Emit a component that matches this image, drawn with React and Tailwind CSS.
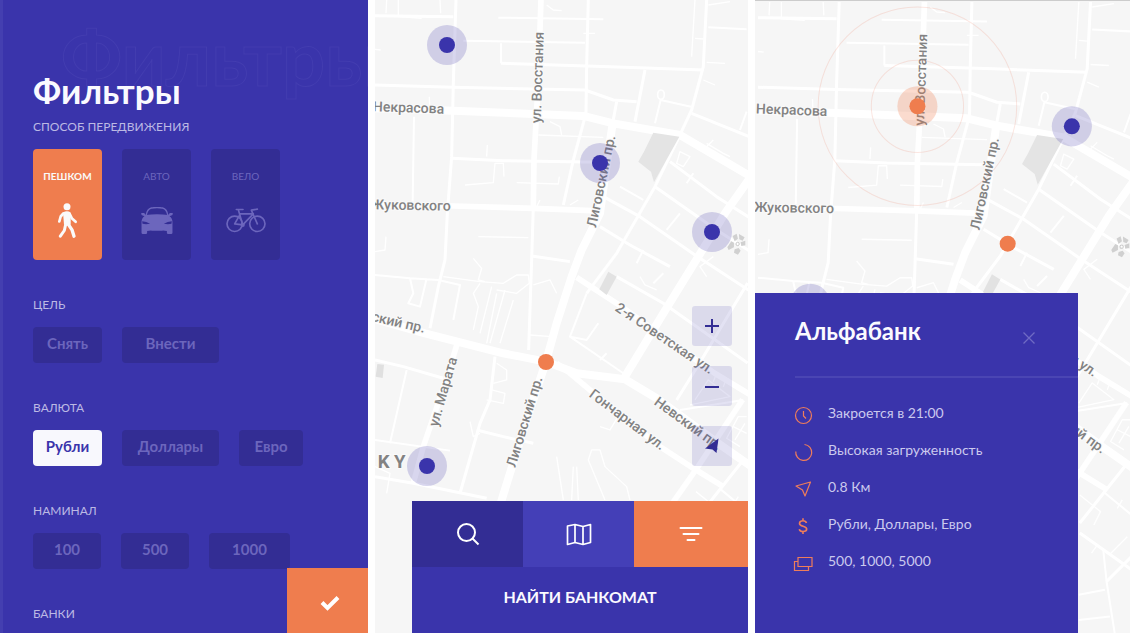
import React from "react";

const ROADS = {
  major: [
    "M15 325L250 332L640 348L730 370L930 405L1140 528",
    "M728 370L712 480L690 640L635 750L605 830L560 970L528 1085L470 1260L395 1500L340 1700",
    "M1150 520L1065 640L985 770L880 940L765 1130",
    "M-10 950L165 1000L400 1060L528 1085L620 1120L765 1138L860 1195L1043 1329L1180 1425",
  ],
  avenue: [
    "M513 0L505 240L492 480L490 620",
    "M560 1090L600 1120L660 1170L870 1340L975 1408L1060 1460",
    "M620 832L740 910L1033 1119L1150 1190",
    "M15 615L250 618L490 625L665 632",
    "M1118 1199L978 1409L900 1520L840 1620",
    "M262 1030L225 1150L160 1340L130 1450",
  ],
  street: [
    "M258 0L250 250L245 470L232 640L225 780L205 860L180 985",
    "M490 620L485 780L476 1050",
    "M655 0L650 200L648 340L610 480L580 615",
    "M1010 0L1000 200L965 330L930 405",
    "M930 405L855 560L740 760L650 880",
    "M15 47L250 50M15 255L250 262L645 270L730 300L800 305",
    "M393 190L720 200L1000 210M825 210L795 365M965 340L1150 415",
    "M740 305L728 370M245 475L400 482L690 487",
    "M740 830L880 910L978 979L1133 1089M900 485L1040 590L1150 660",
    "M855 560L1040 690L1150 760M700 590L810 650L975 765L1150 880",
    "M690 680L780 735L900 800M485 768L600 785",
    "M15 1080L100 1100L220 1135M375 1070L360 1200L330 1270L270 1480",
    "M320 1290L400 1310L490 1330M15 1430L130 1450L350 1495",
    "M1113 1389L978 1559M978 1589L1150 1711M1133 1659L1058 1734",
    "M1133 849L983 1099L920 1200",
  ],
  lane: [
    "M280 122L645 128M393 130L393 190M385 53L700 58M1015 82L1130 88",
    "M855 370L872 300L963 320M132 350L128 605M110 1110L60 1330",
    "M650 880L600 1010L760 1120M1130 335L1110 390M750 560L820 600M600 1010L650 1020L685 970M690 1080L710 1060",
    "M930 1230L1120 1200M890 690L930 640M950 550L970 520",
    "M1053 1469L1133 1535M1048 1639L1058 1734L1083 1893",
    "M975 1774L1053 1759M975 1849L1068 1839M15 1320L240 1352",
    "M820 750L800 790M880 820L850 850",
    "M15 825L120 835L205 840L270 855L250 960M120 835L130 880L115 910L150 920L170 835",
  ],
  path: [
    "M975 0L965 170M975 115L1000 117M1010 187L1065 190M1000 240L1035 255M1015 15L1080 5",
    "M505 405L700 412M352 435L350 470M285 555L370 548L375 490L400 490L402 530",
    "M440 548L565 552L568 530M540 365L570 380L575 405M325 710L475 713M15 755L45 750L48 710",
    "M530 15L550 30L575 32M640 100L675 100M15 148L32 150M85 0L85 50L155 55M50 0L48 40M210 0L212 40",
    "M178 290L180 340M600 615L625 600M510 600L500 620",
    "M310 775L335 805L325 840L345 845M220 830L330 845L400 850L440 825L475 825L478 850L440 880L380 870",
    "M330 850L310 880L325 920L310 990M365 860L330 1000M380 880L350 1030M405 870L360 1030M430 900L390 1030",
    "M380 1090L410 1110L410 1140L370 1150M365 1170L405 1180L400 1210L350 1200",
    "M480 1005L545 1010L540 1040M490 855L540 840L560 880",
    "M560 1370L580 1500M620 1400L625 1500M610 1400L605 1500",
    "M705 1500L655 1380L665 1350L690 1350L705 1400L770 1460L780 1500",
    "M690 1280L720 1290L750 1240M300 1265L310 1310L330 1300M15 1400L60 1420L50 1480",
    "M930 455L960 470L940 500L920 490ZM960 430L990 450M1010 430L1060 460L1080 470M1030 420L1000 450",
    "M975 1200L1015 1140L1080 1190L960 1215M1030 1145L1040 1120M1060 1160L1070 1135",
    "M1130 1250L1105 1250L1070 1315L1110 1340M1125 1270L1095 1320M1090 1280L1130 1300",
    "M978 1475L1040 1525L1020 1565M1013 1649L1030 1625M1090 1515L1105 1490M1070 1650L1120 1600",
    "M810 830L825 855L860 870M1010 830L990 800L1030 770",
  ],
};

const LABELS = [
  { text: "ул. Восстания", x: 512, y: 370, angle: -88 },
  { text: "ул. Некрасова", x: 222, y: 341, angle: 2, anchor: "end" },
  { text: "ул. Жуковского", x: 242, y: 632, angle: 1, anchor: "end" },
  { text: "Лиговский пр.", x: 678, y: 684, angle: -78 },
  { text: "Невский пр.", x: 162, y: 999, angle: 13, anchor: "end" },
  { text: "ул. Марата", x: 203, y: 1282, angle: -74 },
  { text: "Лиговский пр.", x: 436, y: 1404, angle: -73 },
  { text: "Гончарная ул.", x: 655, y: 1188, angle: 37 },
  { text: "Невский пр.", x: 850, y: 1212, angle: 36 },
  { text: "2-я Советская ул.", x: 733, y: 930, angle: 34 },
];

function CityMap({ dx, dy, children }) {
  return (
    <svg
      viewBox="0 0 374 633"
      preserveAspectRatio="xMinYMin slice"
      className="absolute inset-0 h-full w-full bg-[#f6f6f6]"
      role="img"
      aria-label="Карта города"
    >
      <g transform={`translate(${dx} ${dy}) scale(0.3333)`}>
        <g fill="none" stroke="#ffffff" strokeLinejoin="round">
          {ROADS.path.map((d) => <path key={d} d={d} strokeWidth="4" />)}
          {ROADS.lane.map((d) => <path key={d} d={d} strokeWidth="6" />)}
          {ROADS.street.map((d) => <path key={d} d={d} strokeWidth="9" />)}
          {ROADS.avenue.map((d) => <path key={d} d={d} strokeWidth="17" />)}
          {ROADS.major.map((d) => <path key={d} d={d} strokeWidth="24" />)}
          <ellipse cx="873" cy="284" rx="10" ry="14" strokeWidth="5" />
        </g>
        <path d="M850 398L928 410L852 547L843 515L805 485L822 455Z" fill="#e4e4e4" />
        <path d="M715 815L740 830L710 885L688 868Z" fill="#e2e2e2" />
        <path d="M22 1092L42 1094L38 1134L17 1130Z" fill="#e0e0e0" />
        <g fill="#d0d0d0">
          <path d="M1088 708L1100 701L1104 716L1094 724Z" />
          <path d="M1107 702L1124 712L1118 722L1108 718Z" />
          <path d="M1084 724L1092 728L1092 742L1076 750L1072 742Z" />
          <path d="M1112 727L1126 722L1126 736L1114 738Z" />
          <path d="M1094 748L1106 744L1112 752L1104 764L1092 758Z" />
        </g>
        <circle cx="1103" cy="732" r="5" fill="none" stroke="#c8c8c8" strokeWidth="3" />
        <g
          fontFamily="Roboto, 'Liberation Sans', sans-serif"
          fontSize="42"
          fontWeight="500"
          fill="#828282"
          stroke="#fafafa"
          strokeWidth="6"
          paintOrder="stroke"
        >
          {LABELS.map((l, i) => (
            <text key={i} textAnchor={l.anchor || "start"} transform={`translate(${l.x} ${l.y}) rotate(${l.angle})`}>
              {l.text}
            </text>
          ))}
          <text y="1403" fontSize="56" fontWeight="700">
            <tspan x="23">K</tspan>
            <tspan x="72">Y</tspan>
          </text>
        </g>
      </g>
      {children}
    </svg>
  );
}

function Pin({ x, y, color = "#3a34ab", halo = "0.2" }) {
  return (
    <g fill={color}>
      <circle cx={x} cy={y} r="20" opacity={halo} />
      <circle cx={x} cy={y} r="8" />
    </g>
  );
}

function WalkIcon() {
  return (
    <svg viewBox="0 0 60 104" className="h-[35px] w-5" aria-hidden="true">
      <circle cx="27" cy="11" r="10.5" fill="#fafafa" />
      <path d="M15 28Q27 21 38 28L38 64Q28 70 18 64Z" fill="#fafafa" />
      <g fill="none" stroke="#fafafa" strokeWidth="8" strokeLinecap="round" strokeLinejoin="round">
        <path d="M16 31L8 40L4 55" />
        <path d="M36 34L42 46L53 56" />
        <path d="M30 62L42 80L48 99" strokeWidth="10" />
        <path d="M23 64L19 82L7 99" strokeWidth="9" />
      </g>
    </svg>
  );
}

function CarIcon() {
  return (
    <svg viewBox="0 0 96 82" className="h-[27px] w-8" aria-hidden="true">
      <path d="M15 26Q18 6 31 3Q48 0 65 3Q78 6 81 26" fill="none" stroke="currentColor" strokeWidth="4" />
      <path d="M0 18L9 18L14 24Q48 20 82 24L87 18L96 18L95 24L86 28Q95 34 95 46V78Q95 82 91 82H82Q78 82 78 78V73Q66 70 63 72H33Q30 70 18 73V78Q18 82 14 82H5Q1 82 1 78V46Q1 34 10 28L1 24Z" fill="currentColor" />
      <path d="M3 43Q16 43 27 51Q14 54 4 51ZM93 43Q80 43 69 51Q82 54 92 51Z" fill="#332d94" />
    </svg>
  );
}

function BikeIcon() {
  return (
    <svg viewBox="0 0 120 74" className="h-[25px] w-10" fill="none" stroke="#6c66bd" strokeWidth="5" strokeLinecap="round" strokeLinejoin="round" aria-hidden="true">
      <circle cx="26" cy="47" r="23" />
      <circle cx="94" cy="47" r="23" />
      <path d="M26 47L43 17L82 17L50 50L26 47M50 50L37 5M31 4L51 4" />
      <path d="M94 47L76 6L94 3" />
      <circle cx="50" cy="50" r="4" />
    </svg>
  );
}

function Chip({ width, active, children }) {
  return (
    <button
      type="button"
      aria-pressed={!!active}
      className={`${width} h-9 rounded pb-1 text-[15px] font-bold ${active ? "bg-[#f8f8fd] text-[#3a34ab]" : "bg-[#332d94] text-[#6c66bd]"}`}
    >
      {children}
    </button>
  );
}

function Section({ title, children }) {
  return (
    <section>
      <h2 className="text-xs leading-5 text-[#bcb9e4]">{title}</h2>
      {children && <div className="mt-3 mb-[35px] flex gap-5">{children}</div>}
    </section>
  );
}

const TRANSPORT = [
  { name: "ПЕШКОМ", icon: <WalkIcon />, active: true },
  { name: "АВТО", icon: <CarIcon /> },
  { name: "ВЕЛО", icon: <BikeIcon /> },
];

function Filters() {
  return (
    <section className="relative overflow-hidden border-l-[3px] border-[#443fb0] bg-[#3a34ab] pt-[70px] pl-[30px]">
      <div
        aria-hidden="true"
        className="absolute top-3 left-[58px] text-[76px] leading-[90px] font-bold whitespace-nowrap text-[#3a34ab] [-webkit-text-stroke:1px_#433db0]"
      >
        Фильтры
      </div>
      <h1 className="relative mb-[7px] text-[35px] leading-10 font-bold text-[#fafaff]">Фильтры</h1>
      <Section title="СПОСОБ ПЕРЕДВИЖЕНИЯ">
        {TRANSPORT.map((t) => (
          <button
            key={t.name}
            type="button"
            aria-pressed={!!t.active}
            className={`flex h-[111px] w-[69px] flex-col items-center rounded pt-[19px] ${t.active ? "bg-[#ef7d4e] font-bold text-[#fafafa]" : "bg-[#332d94] text-[#6c66bd]"}`}
          >
            <span className="text-[10px] leading-4">{t.name}</span>
            <span className="mt-4 flex h-10 items-center">{t.icon}</span>
          </button>
        ))}
      </Section>
      <Section title="ЦЕЛЬ">
        <Chip width="w-[69px]">Снять</Chip>
        <Chip width="w-[97px]">Внести</Chip>
      </Section>
      <Section title="ВАЛЮТА">
        <Chip width="w-[69px]" active>Рубли</Chip>
        <Chip width="w-[97px]">Доллары</Chip>
        <Chip width="w-16">Евро</Chip>
      </Section>
      <Section title="НАМИНАЛ">
        <Chip width="w-[68px]">100</Chip>
        <Chip width="w-[68px]">500</Chip>
        <Chip width="w-[81px]">1000</Chip>
      </Section>
      <Section title="БАНКИ" />
      <button type="button" aria-label="Применить" className="absolute right-0 bottom-0 flex h-[65px] w-[81px] items-center justify-center bg-[#ef7d4e] pt-1 pl-1">
        <svg viewBox="0 0 20 16" className="h-4 w-5" fill="none" stroke="#fff" strokeWidth="4" aria-hidden="true">
          <path d="M2 7.5L7.5 13L18 2.5" />
        </svg>
      </button>
    </section>
  );
}

function MapButton({ label, children }) {
  return (
    <button type="button" aria-label={label} className="flex size-10 items-center justify-center rounded-[3px] bg-[#3a34ab]/14">
      <svg viewBox="0 0 20 20" className="size-5" fill="none" stroke="#332d94" strokeWidth="2" aria-hidden="true">
        {children}
      </svg>
    </button>
  );
}

function MapScreen() {
  return (
    <section className="relative flex flex-col justify-end overflow-hidden">
      <CityMap dx={-5} dy={0}>
        <Pin x={72} y={45} />
        <Pin x={225} y={163} />
        <Pin x={337} y={232} />
        <Pin x={52} y={466} />
        <circle cx="171" cy="362" r="8" fill="#ef7d4e" />
      </CityMap>
      <div className="relative mr-4 mb-[35px] flex flex-col gap-5 self-end">
        <MapButton label="Приблизить"><path d="M10 3V17M3 10H17" /></MapButton>
        <MapButton label="Отдалить"><path d="M3 11H17" /></MapButton>
        <MapButton label="Моё местоположение">
          <path d="M16.500 2.500L14.500 17L10.500 13.500L3 12.500Z" fill="#332d94" stroke="none" />
        </MapButton>
      </div>
      <div className="relative ml-[37px] bg-[#3a34ab]">
        <div className="grid h-[66px] grid-cols-[111fr_111fr_114fr]">
          <button type="button" aria-label="Поиск" className="flex items-center justify-center bg-[#332d94]">
            <svg viewBox="0 0 24 24" className="size-6" fill="none" stroke="#fff" strokeWidth="2" aria-hidden="true">
              <circle cx="10.500" cy="10.500" r="8.500" />
              <path d="M16.500 16.500L22.500 22.500" />
            </svg>
          </button>
          <button type="button" aria-label="Карта" className="flex items-center justify-center bg-[#443fb7]">
            <svg viewBox="0 0 26 24" className="h-6 w-[26px]" fill="none" stroke="#fff" strokeWidth="1.700" strokeLinejoin="round" aria-hidden="true">
              <path d="M1.500 4L9 2.500L17 4.500L24.500 2.500V20.500L17 22.500L9 20.500L1.500 22.500ZM9 2.500V20.500M17 4.500V22.500" />
            </svg>
          </button>
          <button type="button" aria-label="Фильтры" className="flex items-center justify-center bg-[#ef7d4e]">
            <svg viewBox="0 0 24 16" className="h-4 w-6" fill="none" stroke="#fff" strokeWidth="2" strokeLinecap="round" aria-hidden="true">
              <path d="M1.500 2H22.500M4.500 8H19.500M8.500 14H15.500" />
            </svg>
          </button>
        </div>
        <button type="button" className="h-[66px] w-full pb-[6px] text-base font-bold text-[#fafaff]">НАЙТИ БАНКОМАТ</button>
      </div>
    </section>
  );
}

const DETAILS = [
  {
    text: "Закроется в 21:00",
    icon: <><circle cx="8.5" cy="9.5" r="8" /><path d="M8.500 5V10L11 12.500" /></>,
  },
  {
    text: "Высокая загруженность",
    icon: <path d="M9.500 1.500A8 8 0 1 1 .8 8.500" />,
  },
  {
    text: "0.8 Км",
    icon: <path d="M1 6L15.500 2L10 16L7.500 10Z" strokeLinejoin="round" />,
  },
  {
    text: "Рубли, Доллары, Евро",
    icon: <path d="M11.500 6C11 4.400 9.700 3.800 8 3.800C6 3.800 4.500 4.800 4.500 6.400C4.500 10 11.700 8.400 11.700 12C11.700 13.600 10.200 14.500 8 14.500C6 14.500 4.700 13.700 4.200 12.200M8 1.200V3.800M8 14.500V17" strokeWidth="1.600" />,
  },
  {
    text: "500, 1000, 5000",
    icon: <path d="M3 3.500H17V12.500H3ZM3 7.500H-.5V16.500H13.500V12.500" />,
  },
];

function BankScreen() {
  return (
    <section className="relative flex flex-col justify-end overflow-hidden border-t border-[#cccccc]">
      <CityMap dx={-2} dy={1}>
        <g fill="none" stroke="#e8603c" strokeOpacity="0.15">
          <circle cx="162" cy="105" r="46" />
          <circle cx="162" cy="105" r="99" />
        </g>
        <Pin x={162} y={105} color="#ef7d4e" halo="0.28" />
        <Pin x={316} y={125} />
        <Pin x={55} y={302} />
        <circle cx="252" cy="242" r="8" fill="#ef7d4e" />
      </CityMap>
      <article className="relative mr-[52px] bg-[#3a34ab] pt-[18px] pb-[54px] pl-10">
        <div className="flex h-10 items-center justify-between">
          <h2 className="text-2xl leading-10 font-bold text-[#fafaff]">Альфабанк</h2>
          <button type="button" aria-label="Закрыть" className="mt-[14px] mr-[42px]">
            <svg viewBox="0 0 14 14" className="size-[14px]" stroke="#6f6ac4" strokeWidth="1.300" aria-hidden="true">
              <path d="M1.500 1.500L12.500 12.500M12.500 1.500L1.500 12.500" />
            </svg>
          </button>
        </div>
        <div className="mt-[25px] h-[2px] bg-[#4a45b3]" />
        <ul className="mt-4">
          {DETAILS.map((d) => (
            <li key={d.text} className="flex h-[37px] items-center gap-[15px] text-sm text-[#cbc9ee]">
              <svg viewBox="0 0 18 18" className="mt-1 size-[18px] shrink-0 overflow-visible" fill="none" stroke="#ef7d5a" strokeWidth="1.200" aria-hidden="true">
                {d.icon}
              </svg>
              {d.text}
            </li>
          ))}
        </ul>
      </article>
    </section>
  );
}

export default function App() {
  return (
    <main className="grid min-h-screen grid-cols-[368fr_373fr_375fr] gap-[7px] bg-white font-['Lato','Noto_Sans',sans-serif]">
      <Filters />
      <MapScreen />
      <BankScreen />
    </main>
  );
}
